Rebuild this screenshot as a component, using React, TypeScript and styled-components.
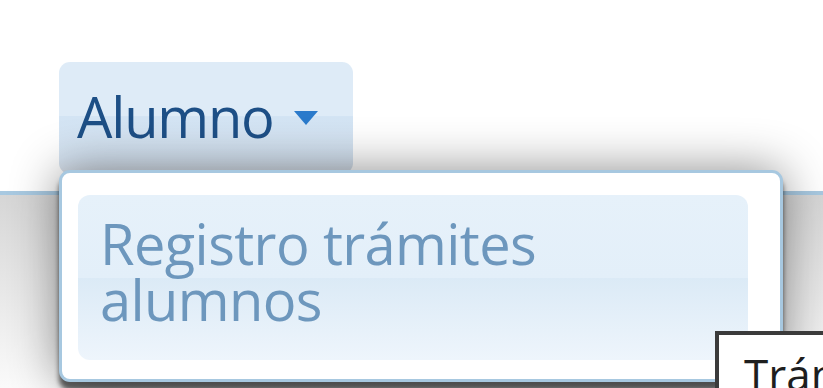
import React from "react";
import styled, { createGlobalStyle } from "styled-components";

const GlobalStyle = createGlobalStyle`
  html, body { margin: 0; padding: 0; background: #ffffff; overflow: hidden; }
  body { font-family: "Open Sans", "Noto Sans", sans-serif; }
`;

const Page = styled.div`
  position: relative;
  width: 823px;
  height: 388px;
  overflow: hidden;
  background: #ffffff;
`;

const Header = styled.div`
  height: 191px;
  box-sizing: border-box;
  padding: 62px 0 0 59px;
  display: flex;
  align-items: flex-start;
`;

const NavButton = styled.button`
  display: flex;
  align-items: center;
  gap: 20px;
  width: 294px;
  height: 112px;
  box-sizing: border-box;
  padding: 0 0 4px 18px;
  border: none;
  border-radius: 11px;
  background: linear-gradient(
    to bottom,
    #deebf7 0%,
    #deebf7 48%,
    #d3e4f4 48%,
    #d5e3f1 85%,
    #d6dee8 100%
  );
  font-family: "Open Sans", "Noto Sans", sans-serif;
  font-size: 56px;
  letter-spacing: -1.2px;
  color: #1d4f86;
  cursor: pointer;
`;

const Caret = styled.span`
  width: 0;
  height: 0;
  border-left: 12px solid transparent;
  border-right: 12px solid transparent;
  border-top: 14px solid #2a7acb;
  margin-top: 4px;
`;

const Content = styled.div`
  height: 197px;
  border-top: 4px solid #a8c9e1;
  background: linear-gradient(to bottom, #d6d6d6 0%, #e8e8e8 50%, #fbfbfb 100%);
`;

const Menu = styled.div`
  position: absolute;
  left: 59px;
  top: 170px;
  width: 724px;
  height: 212px;
  box-sizing: border-box;
  padding: 22px 0 0 16px;
  border: 3px solid #a7c8e0;
  border-radius: 11px;
  background: #ffffff;
  box-shadow: 0 8px 5px rgba(0, 0, 0, 0.6), 0 0 48px rgba(0, 0, 0, 0.45);
`;

const MenuItem = styled.div`
  width: 670px;
  height: 165px;
  box-sizing: border-box;
  padding: 20px 0 0 22px;
  border-radius: 12px;
  background: linear-gradient(
    to bottom,
    #e6f1fa 0%,
    #e3eff9 50%,
    #dbeaf6 50%,
    #eef5fc 100%
  );
  font-family: "Open Sans", "Noto Sans", sans-serif;
  font-size: 56px;
  line-height: 56px;
  letter-spacing: -0.6px;
  color: #6d97bd;
`;

const Tooltip = styled.div`
  position: absolute;
  left: 715px;
  top: 331px;
  box-sizing: border-box;
  padding: 13px 20px 10px 25px;
  border: 4px solid #3b3b3b;
  background: #ffffff;
  font-family: "Open Sans", "Noto Sans", sans-serif;
  font-size: 44px;
  line-height: 52px;
  color: #1e1e1e;
  white-space: nowrap;
`;

export default function App() {
  return (
    <>
      <GlobalStyle />
      <Page>
        <Header>
          <NavButton>
            Alumno
            <Caret />
          </NavButton>
        </Header>
        <Content />
        <Menu>
          <MenuItem>
            Registro trámites
            <br />
            alumnos
          </MenuItem>
        </Menu>
        <Tooltip>Trámites alumnos</Tooltip>
      </Page>
    </>
  );
}
